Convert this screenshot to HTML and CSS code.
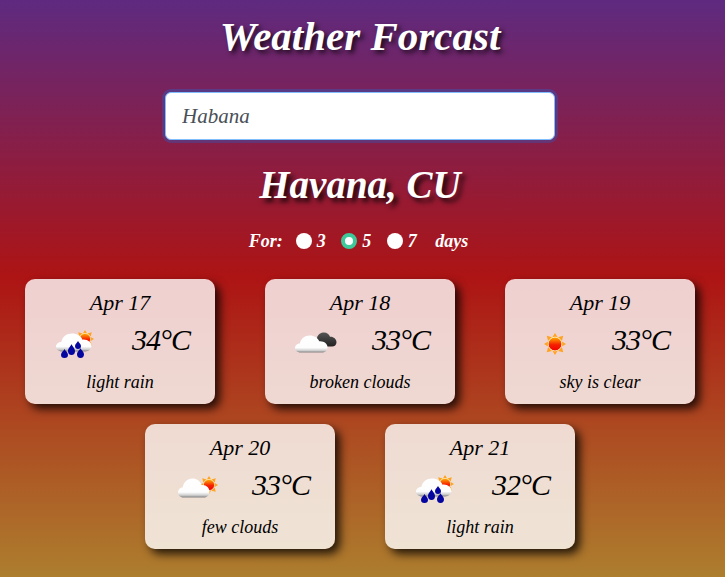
FILE: index.html
```html
<!DOCTYPE html>
<html lang="en">
<head>
    <meta charset="UTF-8">
    <meta name="viewport" content="width=device-width, initial-scale=1.0">
    <title>Weather Forcast</title>
    <link rel="stylesheet" href="styles.css">
</head>
<body>
    <svg class="icon-defs" width="0" height="0">
        <defs>
            <linearGradient id="cloudFill" x1="0" y1="0" x2="0" y2="1">
                <stop offset="0" stop-color="#ffffff"/>
                <stop offset="0.72" stop-color="#fdfdfd"/>
                <stop offset="0.88" stop-color="#cfcfcf"/>
                <stop offset="1" stop-color="#808080"/>
            </linearGradient>
            <linearGradient id="darkFill" x1="0" y1="0" x2="0" y2="1">
                <stop offset="0" stop-color="#555555"/>
                <stop offset="1" stop-color="#222222"/>
            </linearGradient>
            <linearGradient id="sunFill" x1="0" y1="0" x2="0" y2="1">
                <stop offset="0" stop-color="#ffb000"/>
                <stop offset="0.55" stop-color="#f52000"/>
                <stop offset="1" stop-color="#f00000"/>
            </linearGradient>
            <symbol id="sun" viewBox="0 0 24 24">
                <path d="M12 0l3 5h-6zM12 24l-3-5h6zM0 12l5-3v6zM24 12l-5 3v-6zM3 3l5.800 1.500-4.300 4.300zM21 21l-5.800-1.500 4.300-4.300zM21 3l-1.500 5.800-4.300-4.300zM3 21l1.500-5.800 4.300 4.300z" fill="#ffa21f"/>
                <circle cx="12" cy="12" r="7.500" fill="url(#sunFill)" stroke="#ffe9b0" stroke-width="1"/>
            </symbol>
            <symbol id="cloud" viewBox="0 0 34 20" preserveAspectRatio="none">
                <path d="M6 19.500C2 19.500 0 17 0 14.500 0 11.500 2.500 9.500 5 9.500 6 4 10 .5 15 .5 20 .5 23.500 3 25 7 30 6.500 33.500 10 33.500 13.500 33.500 17 31 19.500 27.500 19.500z" fill="url(#cloudFill)"/>
            </symbol>
            <symbol id="dark-cloud" viewBox="0 0 24 14" preserveAspectRatio="none">
                <path d="M5 13.500C2 13.500 0 12 0 9.500 0 7 2 5.500 4 5.500 5 2 8 .5 11 .5 14 .5 16 2 17 4.500 20 4 23.500 6.500 23.500 9.500 23.500 12 21.500 13.500 19 13.500z" fill="url(#darkFill)"/>
            </symbol>
            <symbol id="drop" viewBox="0 0 8 11" preserveAspectRatio="none">
                <path d="M4 0C4.500 2 8 4 8 7A4 4 0 0 1 0 7C0 4 3.500 2 4 0z" fill="#0505a0"/>
            </symbol>
        </defs>
    </svg>

    <h1 class="title">Weather Forcast</h1>
    <input class="city-input" type="text" value="Habana">
    <h2 class="city-name">Havana, CU</h2>

    <form class="days-form">
        <span class="days-label">For:</span>
        <label class="days-option"><input type="radio" name="days">3</label>
        <label class="days-option"><input type="radio" name="days" checked>5</label>
        <label class="days-option"><input type="radio" name="days">7</label>
        <span class="days-unit">days</span>
    </form>

    <div class="cards">
        <div class="card">
            <div class="card-date">Apr 17</div>
            <div class="card-main">
                <svg class="weather-icon" viewBox="0 0 50 40">
                    <use href="#sun" x="26" y="11" width="18" height="18"/>
                    <use href="#cloud" x="6" y="14" width="36" height="19"/>
                    <use href="#drop" x="11" y="30" width="7" height="9"/>
                    <use href="#drop" x="18" y="25" width="7" height="11"/>
                    <use href="#drop" x="25" y="22" width="6" height="8"/>
                    <use href="#drop" x="27" y="29" width="7" height="10"/>
                </svg>
                <div class="card-temp">34°C</div>
            </div>
            <div class="card-desc">light rain</div>
        </div>
        <div class="card">
            <div class="card-date">Apr 18</div>
            <div class="card-main">
                <svg class="weather-icon" viewBox="0 0 50 40">
                    <use href="#dark-cloud" x="23" y="13" width="24" height="15"/>
                    <use href="#cloud" x="5" y="16" width="33" height="18"/>
                </svg>
                <div class="card-temp">33°C</div>
            </div>
            <div class="card-desc">broken clouds</div>
        </div>
        <div class="card">
            <div class="card-date">Apr 19</div>
            <div class="card-main">
                <svg class="weather-icon" viewBox="0 0 50 40">
                    <use href="#sun" x="14" y="14" width="22" height="22"/>
                </svg>
                <div class="card-temp">33°C</div>
            </div>
            <div class="card-desc">sky is clear</div>
        </div>
        <div class="card">
            <div class="card-date">Apr 20</div>
            <div class="card-main">
                <svg class="weather-icon" viewBox="0 0 50 40">
                    <use href="#sun" x="30" y="12" width="18" height="18"/>
                    <use href="#cloud" x="8" y="14" width="32" height="20"/>
                </svg>
                <div class="card-temp">33°C</div>
            </div>
            <div class="card-desc">few clouds</div>
        </div>
        <div class="card">
            <div class="card-date">Apr 21</div>
            <div class="card-main">
                <svg class="weather-icon" viewBox="0 0 50 40">
                    <use href="#sun" x="26" y="11" width="18" height="18"/>
                    <use href="#cloud" x="6" y="14" width="36" height="19"/>
                    <use href="#drop" x="11" y="30" width="7" height="9"/>
                    <use href="#drop" x="18" y="25" width="7" height="11"/>
                    <use href="#drop" x="25" y="22" width="6" height="8"/>
                    <use href="#drop" x="27" y="29" width="7" height="10"/>
                </svg>
                <div class="card-temp">32°C</div>
            </div>
            <div class="card-desc">light rain</div>
        </div>
    </div>
</body>
</html>
```

FILE: styles.css
```css
* {
    box-sizing: border-box;
}
html {
    height: 577px;
    overflow: hidden;
    background: linear-gradient(to bottom, #5e2a80 0%, #ad1414 48%, #ad7e2e 100%);
}
body {
    width: 720px;
    margin: 0;
    text-align: center;
    font-family: "Liberation Serif", serif;
    font-style: italic;
    color: white;
}
.icon-defs {
    position: absolute;
}
.title {
    margin: 0;
    padding-top: 14px;
    height: 92px;
    font-size: 41px;
    line-height: 44px;
    font-weight: bold;
    text-shadow: 3px 3px 5px rgba(0, 0, 0, 0.75);
}
.city-input {
    display: block;
    width: 390px;
    height: 48px;
    margin: 0 auto;
    padding: 0 16px;
    font: italic 21px "Liberation Serif", serif;
    color: #495057;
    background: white;
    border: 1px solid #80bdff;
    border-radius: 6px;
    box-shadow: 0 0 0 3px rgba(0, 123, 255, 0.25);
    outline: none;
}
.city-name {
    margin: 0;
    padding-top: 21px;
    height: 85px;
    font-size: 39px;
    line-height: 48px;
    font-weight: bold;
    text-shadow: 4px 4px 5px rgba(0, 0, 0, 0.8);
}
.days-form {
    display: flex;
    justify-content: center;
    align-items: center;
    height: 26px;
    margin-top: 3px;
    font-size: 18px;
    font-weight: bold;
}
.days-label {
    margin-right: 13px;
}
.days-option {
    display: flex;
    align-items: center;
    width: 45.5px;
}
.days-option input {
    appearance: none;
    width: 16px;
    height: 16px;
    margin: 0 5px 0 0;
    background: white;
    border-radius: 50%;
}
.days-option input:checked {
    background: white;
    border: 4px solid #3ec99a;
}
.days-unit {
    margin-left: 3px;
    margin-right: 3px;
}
.cards {
    display: flex;
    flex-wrap: wrap;
    justify-content: center;
    margin-top: 25px;
}
.card {
    width: 190px;
    height: 125px;
    margin: 0 25px 20px;
    padding-top: 10px;
    color: black;
    background: rgba(255, 255, 255, 0.8);
    border-radius: 10px;
    box-shadow: 5px 5px 10px rgba(0, 0, 0, 0.8);
}
.card-date {
    font-size: 22px;
    line-height: 28px;
}
.card-main {
    display: flex;
    justify-content: space-between;
    align-items: center;
    height: 44px;
    padding: 0 25px;
}
.weather-icon {
    width: 50px;
    height: 40px;
    flex: none;
}
.card-temp {
    padding-top: 2px;
    font-size: 30px;
    letter-spacing: -1px;
    line-height: 40px;
    white-space: nowrap;
}
.card-desc {
    margin-top: 10px;
    font-size: 18px;
    line-height: 22px;
}
```
